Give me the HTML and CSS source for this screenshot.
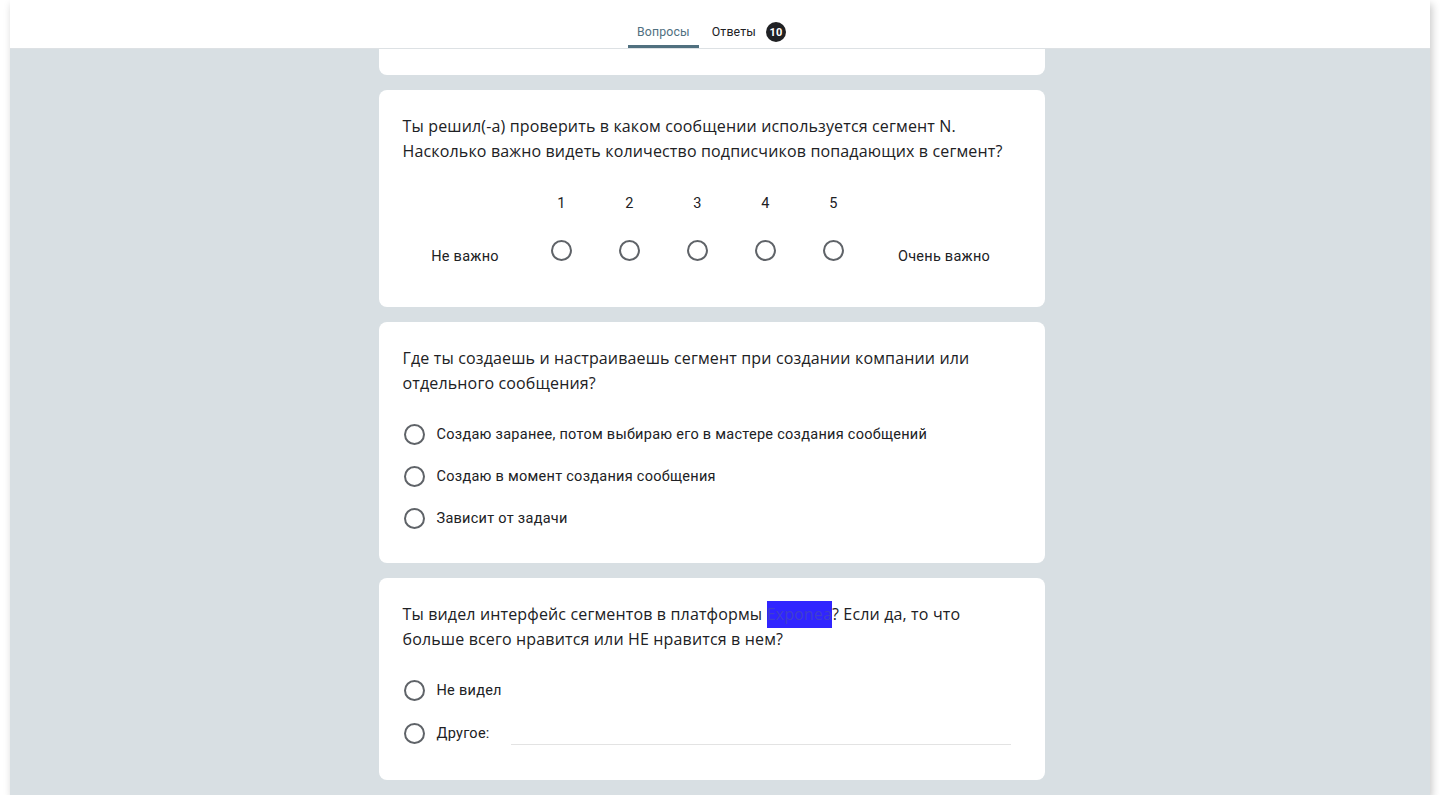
FILE: index.html
```html
<!DOCTYPE html>
<html lang="ru">
<head>
<meta charset="utf-8">
<title>Форма</title>
<link rel="stylesheet" href="styles.css">
</head>
<body>
<div class="frame">
  <header class="topbar">
    <nav class="tabs">
      <div class="tab tab-active">Вопросы</div>
      <div class="tab">Ответы <span class="badge">10</span></div>
    </nav>
  </header>
  <main class="content">
    <section class="card card-cut"></section>

    <section class="card">
      <div class="question">Ты решил(-а) проверить в каком сообщении используется сегмент N.<br>Насколько важно видеть количество подписчиков попадающих в сегмент?</div>
      <div class="scale">
        <div class="scale-label"></div>
        <div class="scale-num">1</div>
        <div class="scale-num">2</div>
        <div class="scale-num">3</div>
        <div class="scale-num">4</div>
        <div class="scale-num">5</div>
        <div class="scale-label"></div>
        <div class="scale-label scale-text">Не важно</div>
        <div class="scale-radio"><span class="radio"></span></div>
        <div class="scale-radio"><span class="radio"></span></div>
        <div class="scale-radio"><span class="radio"></span></div>
        <div class="scale-radio"><span class="radio"></span></div>
        <div class="scale-radio"><span class="radio"></span></div>
        <div class="scale-label scale-text">Очень важно</div>
      </div>
    </section>

    <section class="card">
      <div class="question">Где ты создаешь и настраиваешь сегмент при создании компании или<br>отдельного сообщения?</div>
      <div class="options">
        <label class="option"><span class="radio"></span><span>Создаю заранее, потом выбираю его в мастере создания сообщений</span></label>
        <label class="option"><span class="radio"></span><span>Создаю в момент создания сообщения</span></label>
        <label class="option"><span class="radio"></span><span>Зависит от задачи</span></label>
      </div>
    </section>

    <section class="card">
      <div class="question">Ты видел интерфейс сегментов в платформы <span class="redact">Exponea</span>? Если да, то что<br>больше всего нравится или НЕ нравится в нем?</div>
      <div class="options">
        <label class="option"><span class="radio"></span><span>Не видел</span></label>
        <label class="option option-other"><span class="radio"></span><span>Другое:</span><span class="other-input"></span></label>
      </div>
    </section>
  </main>
</div>
</body>
</html>
```
FILE: styles.css
```css
* { box-sizing: border-box; }
html, body { margin: 0; padding: 0; background: #ffffff; }
body { font-family: Roboto, "Noto Sans", sans-serif; color: #202124; }

.frame {
  margin-left: 10px;
  width: 1420px;
  height: 795px;
  background: #d8dfe3;
  overflow: hidden;
  box-shadow: 2px 4px 8px rgba(0,0,0,0.22);
  display: flex;
  flex-direction: column;
}

.topbar {
  height: 49px;
  flex: none;
  background: #ffffff;
  border-bottom: 1px solid #dde1e4;
  display: flex;
  justify-content: center;
  padding-right: 17px;
}
.tabs { display: flex; align-items: stretch; gap: 4px; }
.tab {
  display: flex;
  align-items: flex-end;
  padding: 0 9px 6px;
  font-family: Roboto, "Noto Sans", sans-serif;
  font-size: 12.3px;
  font-weight: 400;
  letter-spacing: 0.15px;
  color: #202124;
  border-bottom: 3px solid transparent;
}
.tab-active { color: #50707f; border-bottom-color: #50707f; }
.badge {
  display: inline-flex;
  align-items: center;
  justify-content: center;
  width: 20px;
  height: 20px;
  margin-left: 10px;
  margin-bottom: -3px;
  border-radius: 50%;
  background: #202124;
  color: #ffffff;
  font-size: 11px;
  font-weight: 700;
}

.content {
  flex: 1;
  display: flex;
  flex-direction: column;
  align-items: center;
  gap: 15px;
  padding-right: 17px;
}

.card {
  width: 666px;
  background: #ffffff;
  border-radius: 8px;
  padding: 24px;
  flex: none;
}
.card-cut { height: 26px; padding: 0; border-radius: 0 0 8px 8px; }

.question {
  font-family: "Open Sans", Roboto, sans-serif;
  font-size: 16px;
  letter-spacing: 0.15px;
  line-height: 25px;
  color: #202124;
}

.redact { background: #3025ff; color: #3f3fcf; padding: 2px 0 3px; }

.scale {
  margin-top: 27px;
  display: grid;
  grid-template-columns: 125px repeat(5, 68px) 153px;
  grid-template-rows: 24px 48px;
  row-gap: 11px;
  padding-bottom: 9px;
}
.scale-num {
  display: flex;
  align-items: center;
  justify-content: center;
  font-size: 14.5px;
  letter-spacing: 0.25px;
}
.scale-radio { display: flex; align-items: center; justify-content: center; }
.scale-text {
  display: flex;
  align-items: center;
  justify-content: center;
  padding-top: 12px;
  font-size: 14.5px;
  letter-spacing: 0.25px;
}

.radio {
  display: inline-block;
  width: 21px;
  height: 21px;
  flex: none;
  border: 2px solid #5f6368;
  border-radius: 50%;
}

.options { margin-top: 17px; display: flex; flex-direction: column; }
.option {
  height: 42px;
  display: flex;
  align-items: center;
  gap: 12px;
  padding-left: 1px;
  font-size: 14.5px;
  letter-spacing: 0.27px;
  color: #202124;
}
.option-other { height: 45px; }
.other-input {
  flex: 1;
  align-self: flex-end;
  margin: 0 10px 11px 9px;
  border-bottom: 1px solid #e3e3e3;
  height: 1px;
}
```
